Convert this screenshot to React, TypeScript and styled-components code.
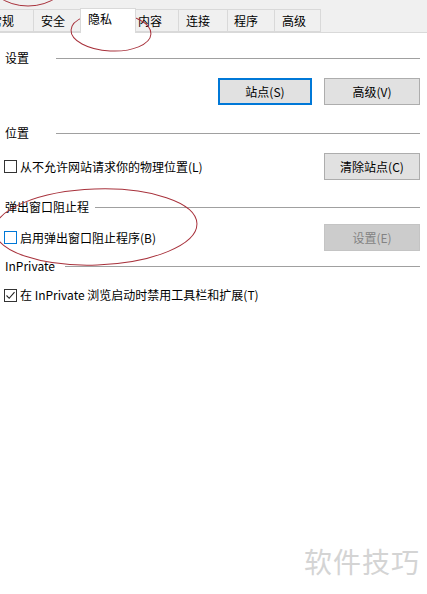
import React from "react";
import styled, { createGlobalStyle } from "styled-components";

const Global = createGlobalStyle`
  html, body { margin: 0; padding: 0; background: #ffffff; }
  body { font-family: "Noto Sans CJK SC", "Microsoft YaHei", sans-serif; }
`;

const Page = styled.div`
  position: relative;
  width: 427px;
  height: 594px;
  background: #ffffff;
  overflow: hidden;
  font-family: "Noto Sans CJK SC", sans-serif;
  font-size: 12px;
  color: #000;
`;

const TabStrip = styled.div`
  height: 33px;
  background: #f0f0f0;
  display: flex;
  align-items: flex-end;
  box-sizing: border-box;
  border-bottom: 1px solid #d9d9d9;
`;

const Tab = styled.div<{ $w: number; $active?: boolean; $pl?: number }>`
  box-sizing: border-box;
  width: ${(p) => p.$w}px;
  height: ${(p) => (p.$active ? 25 : 23)}px;
  margin-bottom: ${(p) => (p.$active ? -1 : 0)}px;
  margin-left: ${(p) => (p.$active ? -2 : 0)}px;
  margin-right: ${(p) => (p.$active ? -2 : 0)}px;
  padding-left: ${(p) => p.$pl ?? 7}px;
  background: ${(p) => (p.$active ? "#ffffff" : "#f0f0f0")};
  border: 1px solid #d9d9d9;
  border-bottom: ${(p) => (p.$active ? "none" : "1px solid #d9d9d9")};
  border-left: ${(p) => (p.$active ? "1px solid #d9d9d9" : "none")};
  position: relative;
  z-index: ${(p) => (p.$active ? 1 : 0)};
  display: flex;
  align-items: ${(p) => (p.$active ? "flex-start" : "center")};
  padding-top: ${(p) => (p.$active ? 2 : 0)}px;
  line-height: 16px;
  white-space: nowrap;
`;

const Content = styled.div`
  display: flex;
  flex-direction: column;
`;

const Header = styled.div<{ $top: number; $gap: number }>`
  display: flex;
  align-items: center;
  height: 16px;
  margin-top: ${(p) => p.$top}px;
  padding: 0 7px 0 5px;
  line-height: 16px;
  font-family: "Noto Sans CJK SC", sans-serif;
  & > span:last-child {
    margin-left: ${(p) => p.$gap}px;
  }
`;

const Rule = styled.span`
  flex: 1;
  height: 1px;
  background: #a0a0a0;
  margin-top: 1px;
`;

const Row = styled.div<{ $top: number }>`
  display: flex;
  align-items: center;
  justify-content: space-between;
  margin-top: ${(p) => p.$top}px;
  padding: 0 7px 0 4px;
  min-height: 16px;
`;

const ButtonGroup = styled.div`
  display: flex;
  gap: 12px;
  margin-left: auto;
`;

const Button = styled.div<{ $w: number; $variant?: "primary" | "disabled" }>`
  box-sizing: border-box;
  width: ${(p) => p.$w}px;
  height: 27px;
  display: flex;
  align-items: center;
  justify-content: center;
  background: ${(p) => (p.$variant === "disabled" ? "#cccccc" : "#e1e1e1")};
  border: ${(p) =>
    p.$variant === "primary"
      ? "2px solid #0078d7"
      : p.$variant === "disabled"
      ? "1px solid #c4c4c4"
      : "1px solid #adadad"};
  color: ${(p) => (p.$variant === "disabled" ? "#838383" : "#000")};
  line-height: 16px;
`;

const CheckLabel = styled.label`
  display: flex;
  align-items: center;
  gap: 3px;
  line-height: 16px;
  white-space: nowrap;
`;

const Box = styled.span<{ $hover?: boolean }>`
  box-sizing: border-box;
  width: 13px;
  height: 13px;
  border: 1px solid ${(p) => (p.$hover ? "#0078d7" : "#333333")};
  background: #fff;
  display: inline-flex;
  align-items: center;
  justify-content: center;
`;

const Overlay = styled.svg`
  position: absolute;
  left: 0;
  top: 0;
  pointer-events: none;
`;

const Watermark = styled.div`
  position: absolute;
  right: 7px;
  bottom: 17px;
  font-size: 28px;
  letter-spacing: 1px;
  color: #d4d4d4;
  font-family: "Noto Sans CJK SC", sans-serif;
  line-height: 32px;
`;

const tabs: { label: string; w: number; active?: boolean; pl?: number }[] = [
  { label: "常规", w: 34, pl: 0 },
  { label: "安全", w: 48, pl: 7 },
  { label: "隐私", w: 56, active: true, pl: 7 },
  { label: "内容", w: 45, pl: 4 },
  { label: "连接", w: 49, pl: 7 },
  { label: "程序", w: 47, pl: 6 },
  { label: "高级", w: 46, pl: 7 },
];

function Checkbox({ checked, hover }: { checked?: boolean; hover?: boolean }) {
  return (
    <Box $hover={hover}>
      {checked && (
        <svg width="11" height="11" viewBox="0 0 11 11">
          <path d="M1.5 5.5 L4.2 8.3 L9.5 2.2" fill="none" stroke="#222" strokeWidth="1.1" />
        </svg>
      )}
    </Box>
  );
}

export default function App() {
  return (
    <Page>
      <Global />
      <TabStrip>
        {tabs.map((t) => (
          <Tab key={t.label} $w={t.w} $active={t.active} $pl={t.pl}>
            {t.label === "常规" ? <span style={{ marginLeft: -10 }}>{t.label}</span> : t.label}
          </Tab>
        ))}
      </TabStrip>
      <Content>
        <Header $top={17} $gap={27}>
          <span>设置</span>
          <Rule />
        </Header>
        <Row $top={12}>
          <ButtonGroup>
            <Button $w={94} $variant="primary">站点(S)</Button>
            <Button $w={96}>高级(V)</Button>
          </ButtonGroup>
        </Row>
        <Header $top={20} $gap={27}>
          <span>位置</span>
          <Rule />
        </Header>
        <Row $top={12}>
          <CheckLabel>
            <Checkbox />
            从不允许网站请求你的物理位置(L)
          </CheckLabel>
          <Button $w={96}>清除站点(C)</Button>
        </Row>
        <Header $top={19} $gap={6}>
          <span>弹出窗口阻止程</span>
          <Rule />
        </Header>
        <Row $top={9}>
          <CheckLabel>
            <Checkbox hover />
            启用弹出窗口阻止程序(B)
          </CheckLabel>
          <Button $w={96} $variant="disabled">设置(E)</Button>
        </Row>
        <Header $top={7} $gap={10}>
          <span>InPrivate</span>
          <Rule />
        </Header>
        <Row $top={13}>
          <CheckLabel>
            <Checkbox checked />
            在 InPrivate 浏览启动时禁用工具栏和扩展(T)
          </CheckLabel>
        </Row>
      </Content>
      <Overlay width="427" height="594" viewBox="0 0 427 594">
        <g fill="none" stroke="#a8323c" strokeWidth="1">
          <ellipse cx="28" cy="-26" rx="42" ry="32" />
          <ellipse cx="111" cy="32" rx="40" ry="19" transform="rotate(3 111 32)" />
          <ellipse cx="96" cy="227" rx="101" ry="38" transform="rotate(-2 96 227)" />
        </g>
      </Overlay>
      <Watermark>软件技巧</Watermark>
    </Page>
  );
}
